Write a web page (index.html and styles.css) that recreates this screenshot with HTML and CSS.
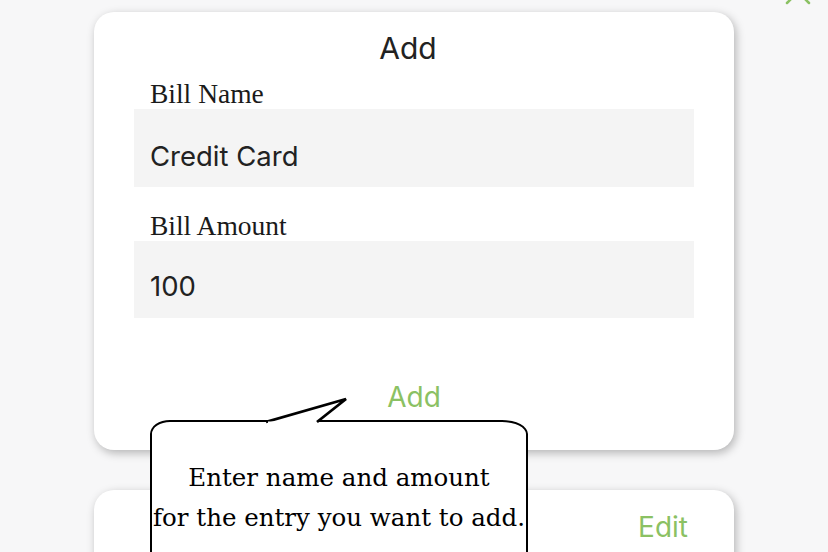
FILE: index.html
```html
<!DOCTYPE html>
<html>
<head>
<meta charset="utf-8">
<link rel="stylesheet" href="styles.css">
</head>
<body>
<div class="page">
  <svg class="close-icon" width="40" height="20" viewBox="0 0 40 20">
    <path d="M9 -19 L31 3 M31 -19 L9 3" stroke="#8bc163" stroke-width="2.5" fill="none" stroke-linecap="round"/>
  </svg>
  <div class="card card-add">
    <div class="title">Add</div>
    <label class="field-label">Bill Name</label>
    <div class="field field-first">Credit Card</div>
    <label class="field-label field-label-second">Bill Amount</label>
    <div class="field field-second">100</div>
    <div class="action">Add</div>
  </div>
  <div class="card card-edit">
    <div class="edit">Edit</div>
  </div>
  <div class="bubble">
    <svg class="bubble-tail" width="90" height="30" viewBox="0 0 90 30">
      <path d="M0 25 L80 2 L51 25" fill="#fff" stroke="#000" stroke-width="2.8" stroke-linejoin="miter"/>
      <rect x="2" y="24.5" width="48" height="5" fill="#fff"/>
    </svg>
    <p class="bubble-text">Enter name and amount<br>for the entry you want to add.</p>
  </div>
</div>
</body>
</html>
```

FILE: styles.css
```css
* { box-sizing: border-box; }
html, body {
  margin: 0;
  padding: 0;
  background: #f7f7f8;
  overflow: hidden;
}
.page {
  position: relative;
  width: 828px;
  height: 552px;
  padding-top: 12px;
  display: flex;
  flex-direction: column;
  align-items: center;
  gap: 40px;
  font-family: Inter, "Noto Sans", sans-serif;
  color: #222;
}
.close-icon {
  position: absolute;
  left: 778px;
  top: 0;
}
.card {
  width: 640px;
  background: #fff;
  border-radius: 20px;
  box-shadow: 2px 3px 10px rgba(0, 0, 0, 0.28);
  flex-shrink: 0;
}
.card-add {
  padding: 18px 40px 36px;
  display: flex;
  flex-direction: column;
}
.title {
  font-size: 30px;
  line-height: 36px;
  text-align: center;
  margin-left: -12px;
}
.field-label {
  font-family: "Liberation Serif", serif;
  font-size: 27.5px;
  line-height: 30px;
  margin-top: 13px;
  padding-left: 16px;
  color: #1a1a1a;
}
.field-label-second { margin-top: 24px; }
.field {
  background: #f4f4f4;
  font-size: 27.5px;
  line-height: 34px;
  padding: 30px 16px 14px;
}
.field-second { padding: 28px 16px 15px; }
.action {
  margin-top: 62px;
  text-align: center;
  font-size: 28px;
  line-height: 34px;
  color: #8bc163;
}
.card-edit {
  height: 120px;
  padding: 20px 46px 0 0;
}
.edit {
  text-align: right;
  font-size: 28px;
  line-height: 34px;
  color: #8bc163;
}
.bubble {
  position: absolute;
  left: 150px;
  top: 420px;
  width: 378px;
  height: 200px;
  background: #fff;
  border: 2.8px solid #000;
  border-radius: 20px 26px 0 0 / 14px 14px 0 0;
}
.bubble-tail {
  position: absolute;
  left: 114px;
  top: -25px;
}
.bubble-text {
  margin: 0;
  padding-top: 36px;
  font-family: "DejaVu Serif", serif;
  font-size: 24.5px;
  line-height: 40px;
  text-align: center;
  color: #000;
}
```
